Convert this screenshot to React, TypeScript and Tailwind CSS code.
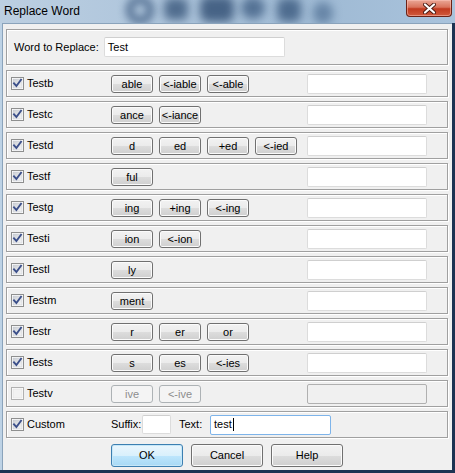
import React from "react";

type BtnProps = { label: string; disabled?: boolean };

function SmallBtn({ label, disabled }: BtnProps) {
  return (
    <div
      className={
        disabled
          ? "w-[42px] h-[18px] rounded-[3px] border border-[#adb2b5] bg-[#f4f4f4] text-[#8d8d8d] flex items-center justify-center leading-none pt-[1px]"
          : "w-[42px] h-[18px] rounded-[3px] border border-[#707070] bg-[linear-gradient(#f2f2f2_0%,#ebebeb_50%,#dddddd_50%,#cfcfcf_100%)] shadow-[inset_0_0_0_1px_#fbfbfb] flex items-center justify-center leading-none pt-[1px]"
      }
    >
      {label}
    </div>
  );
}

function CheckBox({ checked, disabled }: { checked: boolean; disabled?: boolean }) {
  return (
    <svg width="13" height="13" viewBox="0 0 13 13" className="shrink-0">
      <defs>
        <linearGradient id="cbg" x1="0" y1="0" x2="1" y2="1">
          <stop offset="0" stopColor="#cbcfd5" />
          <stop offset="1" stopColor="#f6f6f6" />
        </linearGradient>
      </defs>
      <rect x="0.5" y="0.5" width="12" height="12" fill="#fff" stroke={disabled ? "#b1b1b1" : "#8e8f8f"} />
      <rect x="2" y="2" width="9" height="9" fill={disabled ? "#f2f2f2" : "url(#cbg)"} stroke={disabled ? "#dcdcdc" : "#c3c7cd"} strokeWidth="0.5" />
      {checked && (
        <path d="M3 6.3 L5.4 9 L10 2.8" fill="none" stroke="#3b4f8a" strokeWidth="1.9" strokeLinecap="square" />
      )}
    </svg>
  );
}

function TextBox({ w, h = 20, disabled, children, focused }: { w: string; h?: number; disabled?: boolean; children?: React.ReactNode; focused?: boolean }) {
  const base = "flex items-center px-[3px] rounded-[2px] border ";
  let cls = base;
  if (disabled) cls += "bg-[#f0f0f0] border-[#b0b0b0]";
  else if (focused) cls += "bg-white border-[#7eb4ea]";
  else cls += "bg-white border-[#dcdcdc] border-t-[#cfcfcf]";
  return (
    <div className={cls + " " + w + (h === 19 ? " h-[19px]" : " h-[20px]")}>{children}</div>
  );
}

const groupCls =
  "border border-[#a0a0a0] shadow-[inset_1px_1px_0_#ffffff,1px_1px_0_#ffffff]";

const rows: { name: string; btns: string[]; disabled?: boolean }[] = [
  { name: "Testb", btns: ["able", "<-iable", "<-able"] },
  { name: "Testc", btns: ["ance", "<-iance"] },
  { name: "Testd", btns: ["d", "ed", "+ed", "<-ied"] },
  { name: "Testf", btns: ["ful"] },
  { name: "Testg", btns: ["ing", "+ing", "<-ing"] },
  { name: "Testi", btns: ["ion", "<-ion"] },
  { name: "Testl", btns: ["ly"] },
  { name: "Testm", btns: ["ment"] },
  { name: "Testr", btns: ["r", "er", "or"] },
  { name: "Tests", btns: ["s", "es", "<-ies"] },
  { name: "Testv", btns: ["ive", "<-ive"], disabled: true },
];

function BigBtn({ label, def }: { label: string; def?: boolean }) {
  return (
    <div
      className={
        def
          ? "w-[72px] h-[23px] rounded-[3px] border border-[#3c7fb1] bg-[linear-gradient(#eaf6fd_0%,#d9f0fc_50%,#bee6fd_50%,#a7d9f5_100%)] shadow-[inset_0_0_0_1px_#c6e7f8] flex items-center justify-center"
          : "w-[72px] h-[23px] rounded-[3px] border border-[#707070] bg-[linear-gradient(#f2f2f2_0%,#ebebeb_50%,#dddddd_50%,#cfcfcf_100%)] shadow-[inset_0_0_0_1px_#fbfbfb] flex items-center justify-center"
      }
    >
      {label}
    </div>
  );
}

export default function App() {
  return (
    <div className="w-[455px] h-[473px] overflow-hidden flex flex-col bg-[#b3c9de] font-['Liberation_Sans',Arial,sans-serif] text-[11px] text-black">
      {/* Title bar */}
      <div className="relative h-[23px] shrink-0 overflow-hidden bg-[linear-gradient(90deg,#bccfe1_0%,#aec5dc_35%,#9fbad4_70%,#a9c3dc_100%)]">
        {/* blurred aero background shapes */}
        <div className="absolute left-[126px] top-[-4px] w-[28px] h-[28px] rounded-full border-[7px] border-[#27466e] blur-[4px] opacity-70" />
        <div className="absolute left-[164px] top-[-2px] w-[24px] h-[22px] rounded-[6px] bg-[#203f66] blur-[5px] opacity-65" />
        <div className="absolute left-[200px] top-[-4px] w-[34px] h-[26px] rounded-[8px] bg-[#1e3c63] blur-[5px] opacity-70" />
        <div className="absolute left-[241px] top-[-3px] w-[24px] h-[22px] rounded-full bg-[#2a4a72] blur-[5px] opacity-65" />
        <div className="absolute left-[277px] top-[-2px] w-[24px] h-[24px] rounded-[7px] bg-[#22426a] blur-[5px] opacity-65" />
        <div className="absolute left-[313px] top-[2px] w-[20px] h-[22px] rounded-full bg-[#2f517a] blur-[5px] opacity-50" />
        <div className="relative pl-[4px] pt-[3px] text-[12px] leading-[16px] text-black">Replace Word</div>
        <div className="absolute right-[3px] top-0 w-[46px] h-[17px] rounded-b-[4px] border border-t-0 border-[#6b2216] bg-[linear-gradient(#eaa796_0%,#d9735c_45%,#c13a1f_55%,#d05a3d_100%)] shadow-[inset_0_0_0_1px_rgba(255,200,190,0.5)] flex items-center justify-center">
          <svg width="13" height="11" viewBox="0 0 13 11">
            <path d="M2 1.5 L11 9.5 M11 1.5 L2 9.5" stroke="#4a1a12" strokeWidth="4" strokeLinecap="round" />
            <path d="M2 1.5 L11 9.5 M11 1.5 L2 9.5" stroke="#ffffff" strokeWidth="2.2" strokeLinecap="round" />
          </svg>
        </div>
      </div>

      <div className="flex flex-1 min-h-0">
        <div className="w-[2px] bg-[#bdd2e5]" />
        <div className="flex-1 bg-[#f0f0f0] border-l border-t border-[#8aa3bb] pt-[5px] pl-[3px] pr-[4px] flex flex-col">
          {/* Word to replace */}
          <div className={groupCls + " h-[36px] flex items-center pl-[7px]"}>
            <span>Word to Replace:</span>
            <div className="ml-[5px]">
              <TextBox w="w-[181px]">Test</TextBox>
            </div>
          </div>

          <div className="mt-[5px] flex flex-col gap-[4px]">
            {rows.map((r) => (
              <div key={r.name} className={groupCls + " h-[27px] flex items-center pl-[4px]"}>
                <div className="w-[100px] flex items-center gap-[3px]">
                  <CheckBox checked={!r.disabled} disabled={r.disabled} />
                  <span>{r.name}</span>
                </div>
                <div className="w-[196px] flex gap-[6px]">
                  {r.btns.map((b) => (
                    <SmallBtn key={b} label={b} disabled={r.disabled} />
                  ))}
                </div>
                <TextBox w="w-[120px]" disabled={r.disabled} />
              </div>
            ))}
            {/* Custom */}
            <div className={groupCls + " h-[27px] flex items-center pl-[4px]"}>
              <div className="w-[100px] flex items-center gap-[3px]">
                <CheckBox checked />
                <span>Custom</span>
              </div>
              <span className="w-[31px]">Suffix:</span>
              <TextBox w="w-[29px]" h={19} />
              <span className="ml-[8px] w-[31px]">Text:</span>
              <TextBox w="w-[121px]" focused>
                <span>test</span>
                <span className="inline-block w-[1px] h-[13px] bg-black ml-[1px]" />
              </TextBox>
            </div>
          </div>

          <div className="mt-[6px] ml-[105px] flex gap-[8px]">
            <BigBtn label="OK" def />
            <BigBtn label="Cancel" />
            <BigBtn label="Help" />
          </div>
        </div>
        <div className="w-[3px] bg-[#1d3352]" />
      </div>
      <div className="h-[3px] shrink-0 bg-[#1d3352]" />
    </div>
  );
}
